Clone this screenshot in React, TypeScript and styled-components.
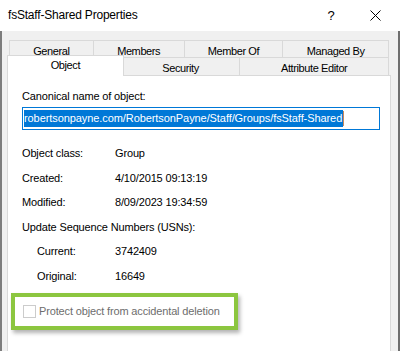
import * as React from 'react';
import styled, { createGlobalStyle } from 'styled-components';

const GlobalStyle = createGlobalStyle`
  html, body {
    margin: 0;
    padding: 0;
    background: #ffffff;
  }
  body {
    font-family: "Liberation Sans", Arial, sans-serif;
    font-size: 11px;
    letter-spacing: -0.15px;
    color: #000000;
  }
`;

const Window = styled.div`
  width: 400px;
  height: 351px;
  display: flex;
  flex-direction: column;
  overflow: hidden;
  background: #ffffff;
`;

const TitleBar = styled.div`
  flex: none;
  height: 31px;
  display: flex;
  align-items: center;
  background: #ffffff;
`;

const Title = styled.div`
  flex: 1;
  padding-left: 8px;
  font-size: 12px;
  line-height: 31px;
  letter-spacing: -0.2px;
`;

const CaptionButton = styled.div<{ $width: number }>`
  width: ${(p) => p.$width}px;
  height: 31px;
  display: flex;
  align-items: center;
  justify-content: center;
  font-size: 13px;
  color: #000;
`;

const Body = styled.div`
  flex: 1;
  display: flex;
  flex-direction: column;
  background: #f0f0f0;
  border-left: 2px solid #7d7d7d;
  border-right: 2px solid #6e6e6e;
  padding: 9px 7px 0 5px;
`;

const TabRow = styled.div<{ $height: number }>`
  display: flex;
  align-items: flex-end;
  height: ${(p) => p.$height}px;
  padding: 0 2px;
`;

const Tab = styled.div<{ $width: number; $selected?: boolean }>`
  box-sizing: border-box;
  width: ${(p) => p.$width}px;
  height: ${(p) => (p.$selected ? '21px' : '100%')};
  display: flex;
  justify-content: center;
  padding-top: ${(p) => (p.$selected ? 3 : 4)}px;
  border: 1px solid #d9d9d9;
  border-bottom: none;
  background: ${(p) => (p.$selected ? '#ffffff' : '#f0f0f0')};
  line-height: 13px;
  letter-spacing: -0.4px;
  white-space: nowrap;

  & + & {
    margin-left: -1px;
  }

  ${(p) =>
    p.$selected &&
    `
    position: relative;
    z-index: 1;
    margin: 0 -2px -1px -2px;
  `}
`;

const Panel = styled.div`
  flex: 1;
  display: flex;
  flex-direction: column;
  background: #ffffff;
  border: 1px solid #d9d9d9;
  border-bottom: none;
  padding: 14px 10px 0 14px;
`;

const FieldLabel = styled.div`
  line-height: 13px;
  height: 13px;
`;

const TextBox = styled.div`
  box-sizing: border-box;
  width: 358px;
  height: 23px;
  margin-top: 4px;
  display: flex;
  align-items: center;
  padding: 0 1px;
  border: 1px solid #0078d7;
  background: #ffffff;
`;

const Selection = styled.span`
  display: inline-flex;
  align-items: center;
  height: 17px;
  line-height: 17px;
  padding-right: 1px;
  background: #0078d7;
  color: #ffffff;
  white-space: nowrap;
  letter-spacing: -0.08px;
`;

const Caret = styled.span`
  display: inline-block;
  width: 1px;
  height: 15px;
  background: #c98a5a;
`;

const InfoGrid = styled.div`
  display: grid;
  grid-template-columns: 93px 1fr;
  grid-auto-rows: 24.5px;
  margin-top: 17px;
`;

const InfoLabel = styled.div<{ $indent?: boolean }>`
  line-height: 13px;
  padding-left: ${(p) => (p.$indent ? 15 : 0)}px;
  white-space: nowrap;
`;

const InfoValue = styled.div`
  line-height: 13px;
`;

const Heading = styled.div`
  grid-column: 1 / -1;
  line-height: 13px;
`;

const Highlight = styled.div`
  box-sizing: border-box;
  width: 227px;
  height: 37px;
  margin: -1px 0 0 -11px;
  display: flex;
  align-items: center;
  gap: 3px;
  padding-left: 8px;
  border: 4px solid #8cc63f;
  background: #ffffff;
  box-shadow: 2px 3px 4px rgba(0, 0, 0, 0.3);
`;

const CheckBox = styled.span`
  box-sizing: border-box;
  width: 13px;
  height: 13px;
  border: 1px solid #cccccc;
  background: #ffffff;
`;

const DisabledText = styled.span`
  color: #6d6d6d;
  line-height: 13px;
  white-space: nowrap;
`;

const backTabs = [
  { label: 'General', width: 85 },
  { label: 'Members', width: 92 },
  { label: 'Member Of', width: 100 },
  { label: 'Managed By', width: 107 },
];

const frontTabs = [
  { label: 'Object', width: 117, selected: true },
  { label: 'Security', width: 120 },
  { label: 'Attribute Editor', width: 150 },
];

const info = [
  { label: 'Object class:', value: 'Group' },
  { label: 'Created:', value: '4/10/2015 09:13:19' },
  { label: 'Modified:', value: '8/09/2023 19:34:59' },
];

const usns = [
  { label: 'Current:', value: '3742409' },
  { label: 'Original:', value: '16649' },
];

const CloseIcon = () => (
  <svg width="11" height="11" viewBox="0 0 11 11">
    <path d="M0.5 0.5 L10.5 10.5 M10.5 0.5 L0.5 10.5" stroke="#000" strokeWidth="1" fill="none" />
  </svg>
);

export default function App() {
  return (
    <>
      <GlobalStyle />
      <Window>
        <TitleBar>
          <Title>fsStaff-Shared Properties</Title>
          <CaptionButton $width={42}>?</CaptionButton>
          <CaptionButton $width={46}>
            <CloseIcon />
          </CaptionButton>
          <CaptionButton $width={2} />
        </TitleBar>
        <Body>
          <TabRow $height={17}>
            {backTabs.map((t) => (
              <Tab key={t.label} $width={t.width}>
                {t.label}
              </Tab>
            ))}
          </TabRow>
          <TabRow $height={18}>
            {frontTabs.map((t) => (
              <Tab key={t.label} $width={t.width} $selected={t.selected}>
                {t.label}
              </Tab>
            ))}
          </TabRow>
          <Panel>
            <FieldLabel>Canonical name of object:</FieldLabel>
            <TextBox>
              <Selection>
                robertsonpayne.com/RobertsonPayne/Staff/Groups/fsStaff-Shared
              </Selection>
              <Caret />
            </TextBox>
            <InfoGrid>
              {info.map((row) => (
                <React.Fragment key={row.label}>
                  <InfoLabel>{row.label}</InfoLabel>
                  <InfoValue>{row.value}</InfoValue>
                </React.Fragment>
              ))}
              <Heading>Update Sequence Numbers (USNs):</Heading>
              {usns.map((row) => (
                <React.Fragment key={row.label}>
                  <InfoLabel $indent>{row.label}</InfoLabel>
                  <InfoValue>{row.value}</InfoValue>
                </React.Fragment>
              ))}
            </InfoGrid>
            <Highlight>
              <CheckBox />
              <DisabledText>Protect object from accidental deletion</DisabledText>
            </Highlight>
          </Panel>
        </Body>
      </Window>
    </>
  );
}
